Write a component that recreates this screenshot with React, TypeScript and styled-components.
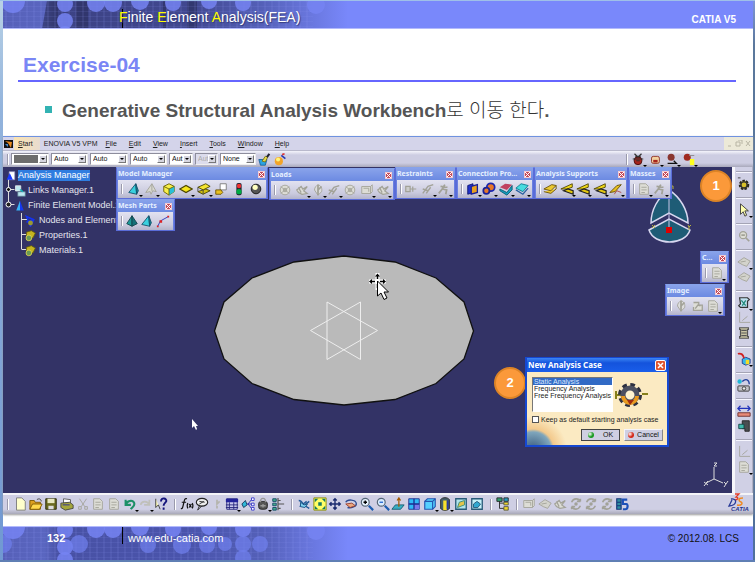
import React from "react";
import styled, { createGlobalStyle, css } from "styled-components";

const sans = `"Liberation Sans", Arial, sans-serif`;
const korean = `"Liberation Sans", "Noto Sans CJK KR", sans-serif`;

const GlobalStyle = createGlobalStyle`
  * { box-sizing: border-box; }
  body { margin: 0; font-family: ${sans}; background: #fff; }
  h1, h2, p, ul { margin: 0; padding: 0; font-weight: normal; list-style: none; }
  button, select, input { font: inherit; margin: 0; }
  svg { display: block; }
`;

/* ---------- slide frame ---------- */

const Slide = styled.div`
  display: flex;
  flex-direction: column;
  min-height: 100vh;
  padding: 1px 2px 2px 3px;
  background:
    linear-gradient(#9fc0e8, #9fc0e8) top / 100% 1px no-repeat,
    linear-gradient(#5f7fb4, #5f7fb4) bottom / 100% 2px no-repeat,
    linear-gradient(#b9d2e6 0, #92b3dc 20%, #7098d2 100%) left / 3px 100% no-repeat,
    linear-gradient(#7f95d8 0, #5b789c 8%, #50709c 100%) right / 2px 100% no-repeat,
    #fff;
`;

const Banner = styled.div`
  position: relative;
  display: flex;
  justify-content: space-between;
  background: #7988fb;
  overflow: hidden;
`;

const BannerArt = styled.svg`
  position: absolute;
  left: 0;
  top: 0;
`;

const TopBanner = styled(Banner).attrs({ as: "header" })`
  height: 28px;
  flex: none;
  border-bottom: 1px solid #b3bafc;
`;

const BottomBanner = styled(Banner).attrs({ as: "footer" })`
  height: 34px;
  flex: none;
  border-top: 1px solid #b3bafc;
`;

const Tick = styled.span<{ $h: number }>`
  position: absolute;
  left: 119px;
  top: ${(p) => (p.$h > 18 ? 8 : 0)}px;
  width: 1px;
  height: ${(p) => p.$h}px;
  background: #000;
`;

const Course = styled.p`
  position: relative;
  padding: 8px 0 0 116px;
  font-size: 14px;
  line-height: 16px;
  color: #fff;
  text-shadow: 1px 1px 1px #333a7a;
  em { font-style: normal; color: #ff0; }
`;

const Product = styled.p`
  position: relative;
  padding: 12px 17px 0 0;
  font-size: 10px;
  line-height: 14px;
  font-weight: bold;
  color: #fff;
`;

const PageNumber = styled.p`
  position: relative;
  padding: 4px 0 0 44px;
  width: 125px;
  font-size: 11px;
  line-height: 14px;
  font-weight: bold;
  color: #fff;
`;

const Site = styled.a`
  position: relative;
  flex: 1;
  padding-top: 4px;
  font-size: 11px;
  line-height: 14px;
  color: #fff;
  text-decoration: none;
`;

const Copyright = styled.p`
  position: relative;
  padding: 5px 14px 0 0;
  font-size: 10px;
  line-height: 14px;
  color: #111;
`;

const Title = styled.h1`
  flex: none;
  margin: 0 17px 0 15px;
  padding: 23px 0 3px 5px;
  border-bottom: 2px solid #6666ff;
  font-size: 21px;
  line-height: 25px;
  font-weight: bold;
  color: #7a86f5;
`;

const Bullet = styled.h2`
  flex: none;
  display: flex;
  align-items: center;
  gap: 10px;
  height: 54px;
  padding: 4px 0 0 42px;
  font-family: ${korean};
  font-size: 19px;
  line-height: 24px;
  font-weight: bold;
  color: #555;
  &::before {
    content: "";
    width: 7px;
    height: 7px;
    margin-bottom: 4px;
    background: #33b3b3;
  }
  span { font-weight: 300; color: #333; }
`;

/* ---------- application window ---------- */

const AppWindow = styled.main`
  flex: 1;
  display: flex;
  flex-direction: column;
  margin-bottom: 12px;
  border-top: 1px solid #6f92e0;
  background: #cdcde2;
  box-shadow: 0 1px 2px #999;
`;

const MenuBar = styled.nav`
  display: flex;
  align-items: center;
  height: 14px;
  background: #d4d4ea;
  border-bottom: 1px solid #b9b9cc;
`;

const MenuItem = styled.button<{ $active?: boolean; $plain?: boolean }>`
  height: 100%;
  border: 0;
  padding: 0 ${(p) => (p.$plain ? 2 : 6)}px 0 ${(p) => (p.$plain ? 4 : 6)}px;
  background: ${(p) => (p.$active ? "linear-gradient(90deg, #fbe3b0, #e8dcd0)" : "none")};
  font-size: 7px;
  line-height: 10px;
  color: #222;
  white-space: nowrap;
  &:first-of-type { padding: 0 7px 0 4px; }
  &::first-letter { text-decoration: ${(p) => (p.$plain ? "none" : "underline")}; }
`;

const WindowControls = styled.div`
  display: flex;
  justify-content: space-around;
  align-items: center;
  width: 29px;
  height: 100%;
  margin-left: auto;
  background: #ece9d8;
`;

const PropertiesBar = styled.div`
  display: flex;
  align-items: center;
  height: 16px;
  padding-left: 4px;
  background: linear-gradient(#f4f4fb, #cdcde2 25%, #cdcde2 75%, #a9a9bb);
`;

const Grip = styled.span<{ $h?: number }>`
  flex: none;
  width: 2px;
  height: ${(p) => p.$h ?? 11}px;
  border-left: 1px solid #9a9aac;
  border-right: 1px solid #fff;
`;

const Combo = styled.label<{ $w: number; $off?: boolean }>`
  display: flex;
  flex: none;
  width: ${(p) => p.$w}px;
  height: 12px;
  margin-left: 2px;
  padding: 1px;
  background: ${(p) => (p.$off ? "#dcdcec" : "#fff")};
  border: 1px solid #8d8d9c;
  border-right-color: #eee;
  border-bottom-color: #eee;
  select {
    flex: 1;
    min-width: 0;
    border: 0;
    padding: 0 0 0 1px;
    appearance: none;
    background: none;
    font-size: 7px;
    line-height: 8px;
    color: ${(p) => (p.$off ? "#aaa" : "#111")};
    opacity: 1;
  }
  svg { flex: none; background: #d6d6e0; border: 1px solid; border-color: #fff #777 #777 #fff; }
`;

const Swatch = styled.span`
  flex: 1;
  margin: 0 1px;
  background: #6d6d6d;
`;

const PropIcons = styled.div<{ $end?: boolean }>`
  display: flex;
  align-items: center;
  gap: 3px;
  margin-left: ${(p) => (p.$end ? "auto" : "2px")};
  margin-right: ${(p) => (p.$end ? "57px" : "0")};
`;

const IconButton = styled.button`
  position: relative;
  flex: none;
  border: 0;
  padding: 0;
  background: none;
`;

const Drop = styled.i`
  position: absolute;
  right: -2px;
  bottom: -1px;
  border: 2px solid transparent;
  border-top-color: #000;
  border-bottom: 0;
`;

const Work = styled.div`
  flex: 1;
  display: flex;
  min-height: 326px;
`;

const Viewport = styled.section`
  position: relative;
  flex: 1;
  background: #333366;
  overflow: hidden;
`;

const SideBar = styled.aside`
  width: 21px;
  padding: 4px 0 0 1px;
  border-left: 3px solid #f6f6fa;
  border-right: 1px solid #b0b0c4;
  background: #d0d0e5;
`;

const SideGroup = styled.div`
  display: flex;
  flex-direction: column;
  align-items: center;
  gap: 1px;
  padding: 5px 0 6px;
  border-top: 1px solid #a4a4b5;
  box-shadow: inset 0 1px #f6f6ff;
`;

const BottomBar = styled.div`
  display: flex;
  align-items: center;
  height: 21px;
  padding: 0 2px 1px 4px;
  border-top: 2px solid #f4f4f8;
  background: linear-gradient(#cfcfe4 75%, #a8a8b8);
`;

const BarGroup = styled.div<{ $w: number }>`
  display: flex;
  justify-content: space-between;
  width: ${(p) => p.$w}px;
  margin: 0 6px 0 4px;
`;

const Logo = styled.svg`
  margin-left: auto;
  margin-top: -2px;
  overflow: visible;
`;

/* ---------- overlays in the viewport ---------- */

const Scene = styled.svg<{ $left?: number; $right?: number; $top?: number; $bottom?: number }>`
  position: absolute;
  left: ${(p) => (p.$left === undefined ? "auto" : `${p.$left}px`)};
  right: ${(p) => (p.$right === undefined ? "auto" : `${p.$right}px`)};
  top: ${(p) => (p.$top === undefined ? "auto" : `${p.$top}px`)};
  bottom: ${(p) => (p.$bottom === undefined ? "auto" : `${p.$bottom}px`)};
`;

const Tree = styled.ul`
  position: absolute;
  left: 0;
  top: 1px;
`;

const Node = styled.li<{ $depth: number; $sel?: boolean }>`
  display: flex;
  align-items: center;
  gap: 2px;
  height: 15px;
  padding-left: ${(p) => [3, 11, 21][p.$depth]}px;
  font-size: 9px;
  line-height: 11px;
  color: #e4e4ee;
  white-space: nowrap;
  span { ${(p) => p.$sel && css`background: #2f7de0; color: #fff;`} }
`;

const Panel = styled.section<{ $x?: number; $right?: number; $y: number; $w: number }>`
  position: absolute;
  ${(p) => (p.$right === undefined ? css`left: ${p.$x}px;` : css`right: ${p.$right}px;`)}
  top: ${(p) => p.$y}px;
  width: ${(p) => p.$w}px;
  border: 1px solid #5a6cd8;
  border-top-color: #86a2ea;
  background: #6a80e0;
`;

const PanelHead = styled.div`
  display: flex;
  justify-content: space-between;
  align-items: center;
  height: 12px;
  padding: 0 2px 0 1px;
  background: linear-gradient(#88a2ea, #6c8ae2);
  font-family: "Noto Sans", sans-serif;
  font-size: 7px;
  line-height: 10px;
  font-weight: bold;
  color: #e6f0ff;
  white-space: nowrap;
`;

const Close = styled.button`
  width: 7px;
  height: 7px;
  padding: 0;
  border: 1px solid #f3c9d0;
  background: #c44a5a;
`;

const PanelBody = styled.div`
  display: flex;
  align-items: center;
  justify-content: space-between;
  height: 18px;
  margin: 0 1px;
  padding: 0 3px;
  background: linear-gradient(#e2e2f0, #cacade 70%, #b4b4ca);
`;

const Badge = styled.span<{ $x?: number; $right?: number; $y: number }>`
  position: absolute;
  ${(p) => (p.$right === undefined ? css`left: ${p.$x}px;` : css`right: ${p.$right}px;`)}
  top: ${(p) => p.$y}px;
  width: 32px;
  height: 32px;
  border: 2px solid #dd8426;
  border-radius: 50%;
  background: #fb993a;
  text-align: center;
  font-size: 13px;
  line-height: 28px;
  font-weight: bold;
  color: #fff;
`;

const Dialog = styled.section`
  position: absolute;
  left: 522px;
  top: 190px;
  width: 144px;
  border: 2px solid #1648d0;
  border-top-width: 1px;
  background: #fbeac2;
`;

const DialogHead = styled.div`
  display: flex;
  justify-content: space-between;
  align-items: center;
  height: 14px;
  padding: 0 1px;
  background: linear-gradient(#3c86f4, #1453dc 35%, #1a5eea);
  font-family: "Noto Sans", sans-serif;
  font-size: 8px;
  line-height: 12px;
  font-weight: bold;
  color: #fff;
  button { width: 11px; height: 11px; padding: 0; border: 1px solid #fff; border-radius: 2px; background: #e0552e; }
`;

const DialogBody = styled.div`
  display: flex;
  flex-direction: column;
  height: 73px;
  padding: 5px 4px 3px 5px;
  background: radial-gradient(circle at 6px 78px, #38587c 0, #7fa6bc 18px, #f3c98c 21px, #fbeac2 34px);
`;

const DialogRow = styled.div`
  display: flex;
  align-items: center;
  gap: 2px;
`;

const ListBox = styled.ul`
  flex: none;
  width: 81px;
  height: 35px;
  border: 1px solid #777;
  border-right-color: #fff;
  border-bottom-color: #fff;
  background: #fff;
`;

const Option = styled.li<{ $sel?: boolean }>`
  height: 7px;
  padding-left: 1px;
  font-size: 7px;
  line-height: 7px;
  white-space: nowrap;
  color: ${(p) => (p.$sel ? "#dce8ff" : "#222")};
  background: ${(p) => (p.$sel ? "#316ac5" : "none")};
`;

const Check = styled.label`
  display: flex;
  align-items: center;
  gap: 2px;
  margin-top: 3px;
  font-size: 7px;
  line-height: 9px;
  color: #222;
  white-space: nowrap;
  input { appearance: none; width: 7px; height: 7px; border: 1px solid #555; background: #fff; }
`;

const Actions = styled.div`
  display: flex;
  justify-content: flex-end;
  gap: 4px;
  margin-top: 5px;
`;

const ActionButton = styled.button<{ $main?: boolean; $dot: string }>`
  display: flex;
  align-items: center;
  justify-content: center;
  gap: ${(p) => (p.$main ? 9 : 3)}px;
  width: 39px;
  height: 12px;
  padding: 0;
  border: 1px solid;
  border-color: ${(p) => (p.$main ? "#444" : "#f4f4fa #888 #888 #f4f4fa")};
  background: #cfcfe2;
  font-size: 7px;
  line-height: 8px;
  color: #111;
  &::before {
    content: "";
    width: 6px;
    height: 6px;
    border-radius: 50%;
    background: radial-gradient(circle at 2px 2px, #fff, ${(p) => p.$dot} 3px);
  }
`;

/* ---------- icons, drawn on a 16 unit grid ---------- */

const G = "#a2a298";
const art: Record<string, React.ReactNode> = {
  tetra: <><path d="M10 2 2 12l9 2z" fill="#39d0de" stroke="#14506a" /><path d="m10 2 3 8-2 4z" fill="#13808e" stroke="#14506a" /></>,
  tetraDark: <><path d="M8 2 2 11l6 3z" fill="#1c9a98" stroke="#12424c" /><path d="m8 2 6 9-6 3z" fill="#147078" stroke="#12424c" /></>,
  tetraOff: <path d="M9 2 2 12l5-1 1 3 2-4 4 1zM9 2v8" fill="#d8d8d0" stroke={G} />,
  cube: <><path d="m2 5 6-3 6 3v6l-6 4-6-4z" fill="#f8f04a" stroke="#665b00" /><path d="m8 8 6-3v6l-6 4z" fill="#28c0d8" /><path d="m2 5 6 3 6-3M8 8v7" stroke="#665b00" fill="none" /></>,
  plate: <path d="m1 8 7-4 7 4-7 4z" fill="#f6e61c" stroke="#4c4600" strokeWidth="1.4" />,
  layers: <><path d="m1 11 9-3 5 2-8 4z" fill="#d2c010" stroke="#444000" /><path d="m1 6 9-4 5 3-8 4z" fill="#f4e430" stroke="#444000" /><path d="m1 6v5M7 9v5" stroke="#444" /></>,
  copyYellow: <><path d="M7 2h7v7H7z" fill="#fff" stroke="#777" /><path d="M2 9h6l2 3-2 2H2z" fill="#e8c020" stroke="#6b5200" /></>,
  light: <><rect x="5" y="1" width="6" height="14" rx="2" fill="#223" /><circle cx="8" cy="4.500" r="2.500" fill="#e33" /><circle cx="8" cy="11" r="3" fill="#0a4" /></>,
  ball: <><circle cx="8" cy="8" r="5.500" fill="#555" stroke="#111" /><circle cx="7" cy="6" r="3" fill="#ffffc0" /></>,
  mesh1d: <><path d="m2 14 3-6 9-5" fill="none" stroke="#2230c0" /><path d="M1 13h2v2H1zM4 7h3v3H4zM13 2h2v2h-2z" fill="#e02020" /></>,
  offRing: <><circle cx="8" cy="8" r="5.500" fill="#ddddd6" stroke={G} /><circle cx="8" cy="8" r="2" fill="none" stroke={G} /><path d="m3 4 10 8M13 4 3 12" stroke={G} /></>,
  offHands: <path d="m2 8 5-4 2 3 5-3-4 5 4 3-6 1-4-2zM4 5l3 6" fill="#ddddd6" stroke={G} strokeWidth="1.400" />,
  offDrop: <><path d="M8 2c4 1 5 5 4 8l-4 4-4-6c0-3 2-5 4-6z" fill="#ddd" stroke={G} /><path d="M8 2v12M8 8l4-4" stroke={G} strokeWidth="2" /></>,
  offArc: <path d="M2 13 8 5l6-2M6 13l5-7M2 8l6 2" fill="none" stroke={G} strokeWidth="1.600" />,
  offBox: <path d="M2 4h10v8H2zM12 4l2-2v8l-2 2M4 6h6v4" fill="#ddddd6" stroke={G} />,
  offPage: <path d="M3 2h7l3 3v9H3zM5 6h6M5 9h6M5 12h4" fill="#ddddd6" stroke={G} />,
  offBolt: <path d="M2 5h5v6H2zM7 8h7M10 5v6" fill="#ccc" stroke={G} strokeWidth="1.400" />,
  offMan: <path d="M9 3 6 8l5 1-1 5M6 8l-4 5M4 5l8 1" fill="none" stroke={G} strokeWidth="2" />,
  offCut: <path d="m4 2 6 9M12 2 6 11M3 11h3v3H3zM10 11h3v3h-3z" fill="none" stroke={G} />,
  offZoom: <><circle cx="7" cy="7" r="4" fill="#ddddd6" stroke={G} strokeWidth="1.500" /><path d="m10 10 4 4M5 7h4" stroke={G} strokeWidth="2" /></>,
  offAxis: <path d="M3 1v12h12M6 11l6-5" fill="none" stroke={G} />,
  offTurn: <path d="M4 4h6v3h4v6H4V9M6 11l3-4 3 1" fill="#ddddd6" stroke={G} strokeWidth="1.500" />,
  offCycle: <><path d="M3 6c2-5 8-5 10-1v-3M13 5h-4M13 10c-2 5-8 5-10 1v3M3 11h4" fill="none" stroke={G} strokeWidth="1.800" /><circle cx="8" cy="8" r="2" fill={G} /></>,
  offWing: <path d="m1 8 7-5 7 4-4 6-5-2zM4 8l6-1" fill="#d3d3cc" stroke={G} />,
  joinA: <><path d="m2 4 6-2v10l-6 2z" fill="#2233cc" stroke="#0a1470" /><path d="m6 5 7-2v9l-7 2z" fill="#e8a020" stroke="#18209a" strokeWidth="1.500" /></>,
  joinB: <><circle cx="10" cy="6" r="4.500" fill="#e87828" stroke="#1c28b0" strokeWidth="2" /><circle cx="5" cy="10" r="3.500" fill="#e87828" stroke="#18209a" strokeWidth="2" /></>,
  joinC: <><path d="m1 6 8 3 6-6-8-1z" fill="#c04060" /><path d="m1 8 8 4 6-8v5l-6 6-8-5z" fill="#149fc0" stroke="#0b5870" /></>,
  joinD: <><path d="m1 7 8 4 6-7-8-2z" fill="#47dce0" stroke="#0c7c90" /><path d="m1 9 8 5 6-7" fill="none" stroke="#2860a0" strokeWidth="1.500" /></>,
  supA: <path d="m1 8 9-5 5 1-6 6zM1 11l8 2 6-5M15 4v4" fill="#ebc832" stroke="#695000" />,
  supB: <><path d="m1 8 13-6v4l-6 2z" fill="#f0d818" stroke="#4d4200" /><path d="m4 10 5-2 6 2v4z" fill="#e4c810" stroke="#222" strokeWidth="1.400" /></>,
  supC: <><path d="m1 12 6-1 7-8-5 1z" fill="#e8c020" stroke="#604a00" /><path d="m6 14 3-4 5 2" stroke="#a44" fill="none" /></>,
  bug: <><circle cx="8" cy="10" r="4.500" fill="#a8241c" stroke="#440a0a" /><path d="m4 2 4 4 4-4M2 8h12M5 5h6M6 10h4" stroke="#333" fill="none" strokeWidth="1.400" /></>,
  bugBox: <><rect x="4" y="5" width="9" height="8" rx="2" fill="#f1d0a0" stroke="#8c2a20" /><path d="M6 9h5v3H6z" fill="#a8241c" /></>,
  bugPen: <><circle cx="7" cy="6" r="4" fill="#8a3630" /><path d="M3 13h10l-3-3" stroke="#111" fill="none" strokeWidth="1.500" /></>,
  bugLamp: <><circle cx="6" cy="6" r="4" fill="#a02a20" /><rect x="9" y="8" width="5" height="7" fill="#ffff20" /><path d="M8 4h6" stroke="#888" /></>,
  brush: <><path d="M1 8h10l-2 7H3z" fill="#2aa4e0" stroke="#185a98" /><path d="m5 10 4-6 3 1-3 6z" fill="#e6d84a" stroke="#6e6a10" /><path d="m11 5 3-4" stroke="#223" strokeWidth="2.500" /></>,
  wand: <><circle cx="6" cy="10" r="5" fill="#f3a428" /><circle cx="5" cy="8" r="2.500" fill="#fff37a" /><path d="m9 3 5 4" stroke="#2638b0" strokeWidth="2" /><path d="m10 2 3-1" stroke="#d33" strokeWidth="2" /></>,
  gear: <><circle cx="8" cy="9" r="4.500" fill="#c8b428" stroke="#26261c" strokeWidth="3" strokeDasharray="2.600 1.200" /><circle cx="8" cy="9" r="3.500" fill="#d8c22a" stroke="#333" strokeWidth="1.500" /><path d="M1 1h3" stroke="#333" /></>,
  arrow: <path d="M4 1v12l3-3 2 5 2-1-2-5h4z" fill="#ffffb0" stroke="#333" />,
  book: <><path d="M3 2h9l2 2-2 2v7H4l-2-2 2-2z" fill="#bfe0f0" stroke="#333" strokeWidth="1.400" /><path d="m5 5 5 6M10 5l-4 6" stroke="#218a7a" strokeWidth="1.500" /></>,
  scroll: <path d="M3 2h10v2h-1v8h1v2H3v-2h1V4H3zM5 5h6M5 8h6M5 11h6" fill="#c9c5a4" stroke="#555" strokeWidth="1.400" />,
  cubeArrow: <><path d="m6 8 4-2 5 2v5l-5 2-4-2z" fill="#36b8ea" stroke="#223a90" /><path d="M10 9h4v5h-4z" fill="#f4dc28" /><path d="M1 2c4-1 6 1 7 5" stroke="#d02020" strokeWidth="2" fill="none" /></>,
  camera: <><circle cx="3" cy="4" r="2.500" fill="#1eb8d8" /><path d="M6 4c4-4 8-2 8 3" fill="none" stroke="#223f9c" strokeWidth="1.500" /><rect x="1" y="9" width="13" height="6" rx="1" fill="#c4c4ca" stroke="#333" /><circle cx="8" cy="12" r="2" fill="#eee" stroke="#333" /></>,
  ruler: <><path d="M2 5h12M4 2 1 5l3 3M12 2l3 3-3 3" stroke="#2233bb" fill="none" strokeWidth="1.400" /><path d="M1 10h14v4H1z" fill="#e88a78" stroke="#6c2a2a" /></>,
  caliper: <><path d="M6 2h8v12H9v-3H6z" fill="#4a4e52" stroke="#222" /><path d="M2 6h6v5H2z" fill="#3fb9ac" stroke="#144" /></>,
  newDoc: <path d="M4 1h6l4 4v10H4z" fill="#ffffcc" stroke="#777" />,
  open: <><path d="M1 14V4h5l1 2h6v8z" fill="#dca020" stroke="#7a5600" /><path d="m1 14 3-6h11l-3 6z" fill="#ffd84c" stroke="#7a5600" /><path d="M9 3c3-2 5 0 5 2" fill="none" stroke="#333" /></>,
  save: <><path d="M2 2h12v12H2z" fill="#6b6b20" stroke="#222200" /><path d="M4 2h8v5H4z" fill="#e8e8c0" /><path d="M5 10h6v4H5z" fill="#ddd" /></>,
  print: <><path d="m4 2 8 1v4H4z" fill="#fff" stroke="#555" /><path d="m1 7 10-1 4 3v4l-9 2-5-3z" fill="#a4a63c" stroke="#444" /><path d="m3 9 8 0" stroke="#2222a0" /></>,
  undo: <path d="M3 3v6h6M3 9c2-6 10-6 10-1 0 3-3 4-4 6" fill="none" stroke="#1d9068" strokeWidth="2.400" />,
  redo: <path d="M13 3v6H7M13 9C11 4 4 4 3 9" fill="none" stroke="#c0c0ba" strokeWidth="2" />,
  help: <><path d="M2 2v10l3-3 2 5" fill="#fffcc0" stroke="#333" /><path d="M8 5c0-5 7-4 6 0-1 2-3 2-3 5M11 12v2.500" stroke="#15157c" strokeWidth="2.200" /></>,
  fx: <><path d="M8 2c-3-1-3 2-4 6s-1 6-3 5M2 6h5M9 7c-1 2-1 4 0 6M14 7c1 2 1 4 0 6M10.500 8l2.500 4M13 8l-2.500 4" stroke="#111" strokeWidth="1.400" /></>,
  chat: <><ellipse cx="8" cy="6" rx="6.500" ry="4.500" fill="#eee" stroke="#222" strokeWidth="1.300" /><path d="m5 10-2 5 5-5M5 5l6 1M5 8l5-3" stroke="#222" fill="none" /></>,
  pin: <path d="M8 3v5l3-3M8 10v3" stroke="#b5b5ae" strokeWidth="2" fill="none" />,
  table: <><path d="M2 2h12v12H2z" fill="#c8c8ee" stroke="#22227a" /><path d="M1 2h14v4H1z" fill="#22229a" /><path d="M1 9h14M1 12h14M5 6v8M10 6v8" stroke="#22227a" /></>,
  share: <><path d="M4 8h4l4-5M8 8l4 5M8 8h4" stroke="#22a" fill="none" /><path d="m1 8 4-4 2 5-4 3z" fill="#2fb8d8" stroke="#135" /><path d="M12 1h3v3h-3zM12 7h3v3h-3zM12 12h3v3h-3z" fill="#fff" stroke="#33c" /></>,
  lock: <><rect x="3" y="5" width="10" height="9" rx="3" fill="#555" stroke="#222" /><path d="M5 6c0-6 6-6 6 0M8 8v4M5 10h6" fill="none" stroke="#999" strokeWidth="1.500" /></>,
  struct: <><path d="M2 2h4v3H2zM2 7h4v3H2zM2 12h4v3H2z" fill="#44b08a" stroke="#146" /><path d="M8 1v14M8 4h3M8 8h7M8 13h3" stroke="#555" strokeWidth="1.400" /></>,
  bird: <><path d="M2 4c3 0 4 2 5 4l4-3M3 11c3-3 6-1 11 2M9 9l5-4" stroke="#235a98" strokeWidth="1.500" /><path d="m4 6 4 3 4-1-3 4-5-1z" fill="#7fd0f0" stroke="#155080" /></>,
  fit: <><path d="M1 1h14v14H1z" fill="#ffff66" stroke="#888800" /><path d="M2 2h4L2 6zM14 2v4l-4-4zM2 14v-4l4 4zM14 14h-4l4-4zM6 6h4v4H6z" fill="#157a64" /></>,
  pan: <path d="M8 2v12M2 8h12M6 4l2-2 2 2M6 12l2 2 2-2M4 6 2 8l2 2M12 6l2 2-2 2" fill="none" stroke="#1a2a6e" strokeWidth="1.600" />,
  rotate: <><path d="M2 6c2-4 11-3 12 1s-6 6-10 5" fill="none" stroke="#2e4c92" strokeWidth="1.500" /><path d="m2 8 7-1 4 3-6 2z" fill="#eca880" stroke="#983a2a" /></>,
  zoomIn: <><circle cx="6" cy="6" r="4.500" fill="#e8f4ff" stroke="#567" strokeWidth="1.300" /><path d="M6 4v4M4 6h4" stroke="#000" strokeWidth="1.500" /><path d="m10 10 5 5" stroke="#1c5db0" strokeWidth="2.500" /></>,
  zoomOut: <><circle cx="6" cy="6" r="4.500" fill="#d9ecff" stroke="#567" strokeWidth="1.300" /><path d="M4 6h4" stroke="#2265d0" strokeWidth="1.500" /><path d="m10 10 5 5" stroke="#1c5db0" strokeWidth="2.500" /></>,
  normal: <><path d="m1 14 4-5h10l-4 5z" fill="#38b0c4" stroke="#125a70" /><path d="M9 11V2M7 4l2-3 2 3" stroke="#a35a00" fill="none" strokeWidth="1.400" /></>,
  quad: <><path d="M2 2h12v12H2z" fill="#30baf6" stroke="#1c2c90" /><path d="M8 8h6v6H8z" fill="#7a78ea" /><path d="M8 2v12M2 8h12" stroke="#1c2c90" strokeWidth="1.500" /></>,
  boxBlue: <><path d="m2 5 3-3h9v9l-3 3H2z" fill="#54d0ff" stroke="#2455b0" strokeWidth="1.300" /><path d="M2 5h9v9M11 5l3-3" fill="none" stroke="#2455b0" strokeWidth="1.300" /></>,
  cylinder: <><path d="M3 3c2-3 8-3 10 0v10c-2 3-8 3-10 0z" fill="#47606c" stroke="#222" /><path d="M6 4h4v11H6z" fill="#f8e02c" /><path d="M10 4h2v10h-2z" fill="#2a38a0" /></>,
  view: <><path d="M2 2h12v12H2z" fill="#b0e4ec" stroke="#285a78" strokeWidth="1.500" /><path d="m4 12 2-6 6-2v5z" fill="#e4c44a" stroke="#387" /></>,
  viewB: <><path d="M2 2h12v12H2z" fill="#c4f0f8" stroke="#285a78" strokeWidth="1.500" /><path d="M4 12V8l4-3 4 3-3 4z" fill="#30a8d0" stroke="#257" /></>,
  feTree: <><path d="M4 4v9h6M4 7h6" stroke="#222" fill="none" /><path d="M1 1h6v4H1z" fill="#35a070" stroke="#222" /><path d="M9 1h5v4H9z" fill="#2a9cc0" stroke="#222" /><path d="M9 6h5v3H9zM9 11h5v4H9z" fill="#f0d828" stroke="#554" /></>,
  linkS: <><path d="M2 2h5v12H2zM2 6h5M2 10h5" fill="#2f8fa0" stroke="#16357a" strokeWidth="1.300" /><path d="M14 3H9v5h4c2 0 2 6-1 6H9" fill="none" stroke="#1c50b8" strokeWidth="2.500" /></>,
  docTri: <><path d="M5 1h9v13H5z" fill="#fff" stroke="#88b" /><path d="M6 3 1 14h10z" fill="#1a3bff" /></>,
  links: <><path d="M2 1h7v7H2z" fill="#bfe8ef" stroke="#eee" /><path d="M5 9h10v6H5z" fill="#bce6f0" stroke="#578" /><path d="m8 6 4 3" stroke="#1bb" strokeWidth="2" /></>,
  fem: <><path d="M8 1 3 14h5z" fill="#38b4f8" /><path d="M8 1v13h5z" fill="#1438f0" /></>,
  nodes: <><path d="m3 3 9 4-4 8zM12 7l-9 3" fill="none" stroke="#1432f0" strokeWidth="2" /><circle cx="8" cy="11" r="3" fill="#9a9830" /></>,
  props: <><path d="m3 4 6-2 5 3-3 6-8-1z" fill="#c5b420" stroke="#635c08" /><circle cx="6" cy="11" r="3.500" fill="#6a9a54" stroke="#e4d84c" /></>,
};

const Icon = ({ name, size = 14 }: { name: string; size?: number }) => (
  <svg width={size} height={size} viewBox="0 0 16 16" fill="none" aria-hidden="true">{art[name]}</svg>
);

/* A trailing "v" marks a tool that opens a list. */
const Tool = ({ id, size }: { id: string; size?: number }) => {
  const drop = id.endsWith(" v");
  const name = id.replace(" v", "");
  return (
    <IconButton type="button" aria-label={name}>
      <Icon name={name} size={size} />
      {drop && <Drop />}
    </IconButton>
  );
};

const Cross = ({ size = 5 }: { size?: number }) => (
  <svg width={size} height={size} viewBox="0 0 5 5"><path d="m0 0 5 5M5 0 0 5" stroke="#fff" /></svg>
);

type Place = { x?: number; right?: number; y: number; w: number };
const ToolPanel = ({ title, tools, x, right, y, w }: Place & { title: string; tools: string[] }) => (
  <Panel $x={x} $right={right} $y={y} $w={w} aria-label={title}>
    <PanelHead>{title}<Close type="button" aria-label="Close"><Cross /></Close></PanelHead>
    <PanelBody><Grip $h={10} />{tools.map((t, i) => <Tool key={i} id={t} />)}</PanelBody>
  </Panel>
);

const panels: (Place & { title: string; tools: string[] })[] = [
  { title: "Model Manager", x: 113, y: 0, w: 152, tools: ["tetra v", "tetraOff v", "cube", "plate v", "layers v", "copyYellow", "light", "ball"] },
  { title: "Loads", x: 266, y: 1, w: 126, tools: ["offRing", "offHands v", "offDrop v", "offArc v", "offRing", "offBox v", "offHands v"] },
  { title: "Restraints", x: 392, y: 0, w: 61, tools: ["offBolt", "offArc v", "offMan v"] },
  { title: "Connection Pro...", x: 453, y: 0, w: 78, tools: ["joinA v", "joinB v", "joinC v", "joinD v"] },
  { title: "Analysis Supports", x: 531, y: 0, w: 94, tools: ["supA", "supB v", "supB v", "supB v", "supC v"] },
  { title: "Masses", x: 625, y: 0, w: 44, tools: ["offPage v", "offMan v"] },
  { title: "Mesh Parts", x: 113, y: 32, w: 59, tools: ["tetraDark", "tetra", "mesh1d"] },
  { title: "C...", right: 3, y: 84, w: 29, tools: ["offPage v"] },
  { title: "Image", right: 7, y: 117, w: 60, tools: ["offDrop", "offTurn", "offPage v"] },
];

const side = [["gear"], ["arrow v"], ["offZoom"], ["offWing v", "offWing"], ["book v", "offAxis", "scroll"], ["cubeArrow v"], ["camera"], ["ruler", "caliper"], ["offAxis", "offPage v"]];

const bottom: { w: number; tools: string[] }[] = [
  { w: 155, tools: ["newDoc", "open", "save", "print", "offCut", "offPage", "offPage", "undo v", "redo v", "help"] },
  { w: 105, tools: ["fx", "chat", "pin", "table v", "share", "lock v", "struct"] },
  { w: 187, tools: ["bird", "fit", "pan", "rotate", "zoomIn", "zoomOut", "normal", "quad", "boxBlue v", "cylinder v", "view", "viewB"] },
  { w: 14, tools: ["feTree"] },
  { w: 107, tools: ["offBox", "offWing", "offHands", "offCycle", "offCycle", "offCycle", "linkS"] },
];

const combos = [
  { value: "Auto", w: 37 }, { value: "Auto", w: 38 }, { value: "Auto", w: 37 },
  { value: "Aut", w: 24 }, { value: "Aut", w: 23, off: true }, { value: "None", w: 36 },
];

const menus = ["Start", "ENOVIA V5 VPM", "File", "Edit", "View", "Insert", "Tools", "Window", "Help"];

const ComboArrow = () => (
  <svg width="8" height="8" viewBox="0 0 6 6"><path d="M1 2h4L3 4z" fill="#000" /></svg>
);

const Pattern = ({ id, rows }: { id: string; rows?: boolean }) => (
  <BannerArt width="345" height="34" viewBox="0 0 345 34" aria-hidden="true">
    <defs>
      <linearGradient id={id}>
        <stop offset="0" stopColor="#5660b8" />
        <stop offset="0.120" stopColor="#5a66c0" />
        <stop offset="0.160" stopColor={rows ? "#4851a4" : "#3c4284"} />
        <stop offset="0.550" stopColor={rows ? "#4a54ac" : "#414890"} />
        <stop offset="0.750" stopColor="#5460b8" />
        <stop offset="1" stopColor="#7988fb" />
      </linearGradient>
      <pattern id={`${id}g`} width="7" height="5" patternUnits="userSpaceOnUse">
        <path d="M0 0h7M3 0v5" stroke="#8e99f4" strokeOpacity="0.220" fill="none" />
      </pattern>
    </defs>
    <rect width="345" height="34" fill={`url(#${id})`} />
    {!rows && <path d="M44 0h11v34H38zM73 0h12v34H73zM160 0h3v34h-3zM184 0h10v34h-10z" fill="#2b2f60" fillOpacity="0.650" />}
    <rect width="310" height="34" fill={`url(#${id}g)`} />
    <g fill="#7584f2" fillOpacity="0.850">
      <circle cx="10" cy="0" r="12" />
      <circle cx="62" cy="3" r="8" /><circle cx="62" cy="20" r="8" /><circle cx="62" cy="33" r="8" />
      <circle cx="93" cy="2" r="9" /><circle cx="110" cy="2" r="9" />
      <circle cx="137" cy="0" r="9" /><circle cx="170" cy="2" r="8" />
      <circle cx="206" cy="0" r="8" /><circle cx="240" cy="2" r="8" /><circle cx="313" cy="4" r="9" />
    </g>
    {rows && (
      <g fill="#7080ee" fillOpacity="0.700">
        <circle cx="0" cy="17" r="9" /><circle cx="76" cy="17" r="9" /><circle cx="145" cy="18" r="8" />
        <circle cx="179" cy="18" r="9" /><circle cx="204" cy="18" r="8" /><circle cx="222" cy="17" r="7" />
        <circle cx="240" cy="17" r="8" /><circle cx="240" cy="31" r="8" /><circle cx="257" cy="17" r="8" />
      </g>
    )}
  </BannerArt>
);

const Plate = () => (
  <Scene $left={200} $top={80} width="290" height="170" viewBox="203 247 290 170" aria-label="Plate">
    <path d="M344 256 395 262 436 278 464 302 473.500 331 464 359 436 383.500 395 399.500 344 405 294 399.500 252 383.500 224 359 214.500 331 224 302 252 278 294 262z" fill="#bababa" stroke="#111" strokeWidth="1.300" />
    <path d="m310.500 330.500 50-28.500v57.500zM377.500 330.500l-50.500-28.500v57.500z" fill="none" stroke="#eee" />
    <path d="M377.500 273v17M369 281.500h17" stroke="#fff" strokeWidth="4" />
    <path d="M377.500 275v13M371 281.500h13" stroke="#000" strokeWidth="1.500" strokeDasharray="4 5" />
    <path d="m375 276.500 2.500-3 2.500 3zM372 279l-3 2.500 3 2.500zM383 279l3 2.500-3 2.500z" fill="#000" />
    <path d="M377.500 281v15l3.500-3 3 6.500 3-1.500-3-6h4.500z" fill="#fff" stroke="#000" />
  </Scene>
);

const Compass = () => (
  <Scene $right={39} $top={18} width="46" height="60" viewBox="648 185 46 60" aria-label="Compass">
    <path d="M670 190C659 197 652 210 652 223l18-10 19 10C689 210 681 197 670 190z" fill="#1e5c76" stroke="#d8d8f0" strokeWidth="1.500" />
    <path d="m650 230 20-11 21 11c-5 16-36 16-41 0z" fill="#1e5c76" stroke="#d8d8f0" strokeWidth="1.500" />
    <path d="M670 190v40" stroke="#c8c8e8" />
    <rect x="667" y="227" width="6" height="6" fill="#d00" />
    <path d="m653 225 3 3M656 225l-3 3M689 225l1 2 2-2M690 227v3M672 186h2v3" fill="none" stroke="#b8b040" />
  </Scene>
);

const Axes = () => (
  <Scene $right={2} $bottom={4} width="28" height="30" viewBox="703 459 28 30" aria-label="Axes">
    <path d="M715 479V467M715 479l-8 4M715 479l9 4" fill="none" stroke="#ddd" />
    <path d="M715 463h3l-3 3h3M705 482l4 3M709 481l-4 5M725 482l2 2 2-3M727 484l-2 3" fill="none" stroke="#ddd" />
  </Scene>
);

export default function App() {
  return (
    <Slide>
      <GlobalStyle />
      <TopBanner>
        <Pattern id="top" />
        <Tick $h={19} />
        <Course><em>F</em>inite <em>E</em>lement <em>A</em>nalysis(FEA)</Course>
        <Product>CATIA V5</Product>
      </TopBanner>
      <Title>Exercise-04</Title>
      <Bullet><div>Generative Structural Analysis Workbench<span>로 이동 한다</span>.</div></Bullet>

      <AppWindow>
        <MenuBar>
          <svg width="11" height="10" viewBox="0 0 11 10"><path d="M1 1h9v8H1z" fill="#111" /><path d="m2 2 3 2 3 5 1-6z" fill="#e88a20" /><path d="M2 5h3v3z" fill="#48c" /></svg>
          {menus.map((m, i) => (
            <MenuItem key={m} type="button" $active={i === 0} $plain={i === 1}>{m}</MenuItem>
          ))}
          <WindowControls>
            <svg width="25" height="7" viewBox="0 0 25 7"><path d="M2 6h3M10 2h4v4h-4zM12 0h4v4M20 1l4 5M24 1l-4 5" fill="none" stroke="#b8b5a4" /></svg>
          </WindowControls>
        </MenuBar>

        <PropertiesBar>
          <Grip />
          <Combo as="div" $w={38}><Swatch /><ComboArrow /></Combo>
          {combos.map((c, i) => (
            <Combo key={i} $w={c.w} $off={c.off}>
              <select aria-label={`Property ${i + 1}`} disabled={c.off} defaultValue={c.value}><option>{c.value}</option></select>
              <ComboArrow />
            </Combo>
          ))}
          <PropIcons><Tool id="brush" size={13} /><Tool id="wand" size={13} /></PropIcons>
          <PropIcons $end><Grip /><Tool id="bug v" /><Tool id="bugBox v" /><Tool id="bugPen v" /><Tool id="bugLamp v" /></PropIcons>
        </PropertiesBar>

        <Work>
          <Viewport>
            <Plate />
            <Scene $left={2} $top={8} width="26" height="82" viewBox="0 0 26 82">
              <path d="M3.500 2v27M3.500 14.500h6M3.500 29.500h6M16.500 38v36M16.500 44.500h6M16.500 59.500h6M16.500 74.500h6" fill="none" stroke="#ddd" />
              <circle cx="3.500" cy="14.500" r="2" fill="#111" stroke="#fff" /><circle cx="3.500" cy="29.500" r="2.500" fill="#222" stroke="#fff" />
            </Scene>
            <Tree>
              <Node $depth={0} $sel><Icon name="docTri" size={10} /><span>Analysis Manager</span></Node>
              <Node $depth={1}><Icon name="links" size={12} /><span>Links Manager.1</span></Node>
              <Node $depth={1}><Icon name="fem" size={12} /><span>Finite Element Model.1</span></Node>
              <Node $depth={2}><Icon name="nodes" size={13} /><span>Nodes and Elements</span></Node>
              <Node $depth={2}><Icon name="props" size={13} /><span>Properties.1</span></Node>
              <Node $depth={2}><Icon name="props" size={13} /><span>Materials.1</span></Node>
            </Tree>
            <Compass />
            {panels.map((p) => <ToolPanel key={p.title} {...p} />)}
            <Badge $right={0} $y={3}>1</Badge>
            <Badge $x={491} $y={200}>2</Badge>
            <Dialog role="dialog" aria-label="New Analysis Case">
              <DialogHead>New Analysis Case<button type="button" aria-label="Close"><svg width="9" height="9" viewBox="0 0 9 9"><path d="m2 2 5 5M7 2 2 7" stroke="#fff" strokeWidth="1.500" /></svg></button></DialogHead>
              <DialogBody>
                <DialogRow>
                  <ListBox role="listbox">
                    <Option role="option" aria-selected $sel>Static Analysis</Option>
                    <Option role="option">Frequency Analysis</Option>
                    <Option role="option">Free Frequency Analysis</Option>
                  </ListBox>
                  <svg width="34" height="26" viewBox="0 0 34 26" aria-hidden="true">
                    <path d="M1 9v8M1 13h5M27 12h6" stroke="#86801c" strokeWidth="2" />
                    <circle cx="15" cy="13" r="10" fill="none" stroke="#2d3040" strokeWidth="4" strokeDasharray="4.500 3.350" />
                    <circle cx="15" cy="13" r="7" fill="#fff4d0" stroke="#4c5060" strokeWidth="5" />
                    <path d="M8 14a7 7 0 0 0 14 0" fill="none" stroke="#e89a20" strokeWidth="4" />
                    <path d="m12 18 3 5 4-5z" fill="#a02c10" />
                  </svg>
                </DialogRow>
                <Check><input type="checkbox" />Keep as default starting analysis case</Check>
                <Actions>
                  <ActionButton type="button" $main $dot="#189a20">OK</ActionButton>
                  <ActionButton type="button" $dot="#d42818">Cancel</ActionButton>
                </Actions>
              </DialogBody>
            </Dialog>
            <Scene $left={188} $top={252} width="8" height="12" viewBox="0 0 8 12"><path d="M1 0v9l2-2 2 4 1-1-1-3h2z" fill="#fff" /></Scene>
            <Axes />
          </Viewport>
          <SideBar>
            {side.map((group, i) => (
              <SideGroup key={i}>{group.map((t, j) => <Tool key={j} id={t} />)}</SideGroup>
            ))}
          </SideBar>
        </Work>

        <BottomBar>
          {bottom.map((g, i) => (
            <React.Fragment key={i}>
              <Grip />
              <BarGroup $w={g.w}>{g.tools.map((t, j) => <Tool key={j} id={t} />)}</BarGroup>
            </React.Fragment>
          ))}
          <Logo width="22" height="18" viewBox="0 0 22 18" aria-label="CATIA">
            <path d="M6 0h4L7 3c3 0 2 3-1 3" fill="none" stroke="#e03a28" strokeWidth="1.300" />
            <path d="M2 5c6-1 7 6-2 7L3 6" fill="none" stroke="#2a3c98" strokeWidth="1.300" />
            <path d="M14 4c-6 0-4 3-2 4s1 4-4 3" fill="none" stroke="#f08a20" strokeWidth="1.500" />
            <text x="2" y="17" fontSize="6" fontWeight="bold" fontStyle="italic" fill="#26348c">CATIA</text>
          </Logo>
        </BottomBar>
      </AppWindow>

      <BottomBanner>
        <Pattern id="foot" rows />
        <Tick $h={17} />
        <PageNumber>132</PageNumber>
        <Site href="#site">www.edu-catia.com</Site>
        <Copyright>© 2012.08. LCS</Copyright>
      </BottomBanner>
    </Slide>
  );
}
